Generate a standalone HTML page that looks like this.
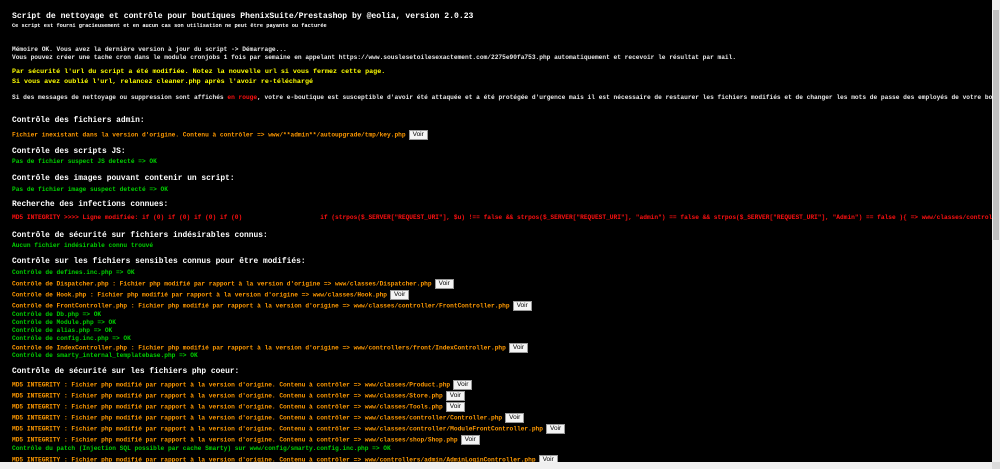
<!DOCTYPE html>
<html><head><meta charset="utf-8"><style>
html,body{margin:0;padding:0;background:#000;width:1000px;height:469px;overflow:hidden;}
#w{position:absolute;left:0;top:0;width:992px;height:462px;overflow:hidden;}
.l{position:absolute;left:12px;white-space:pre;font-family:"Liberation Mono",monospace;font-size:6.2px;line-height:8px;color:#fff;font-weight:bold;}
.t{font-size:8.1px;font-weight:bold;line-height:10px;}
.s{font-size:5.3px;font-weight:bold;}
.y{color:#ffff00;font-weight:bold;font-size:6.7px;}
.h{font-weight:bold;font-size:7.9px;line-height:10px;}
.o{color:#ff9900;}
.g{color:#00d000;}
.r{color:#ff1010;}
.w{color:#e8e8e8;}
.b{display:inline-block;vertical-align:middle;margin-left:3px;background:#f4f4f4;border:1px solid #999;color:#000;font-family:"Liberation Sans",sans-serif;font-size:6.5px;line-height:8px;padding:0 3px;font-weight:normal;}
.vs{position:absolute;left:992px;top:0;width:8px;height:462px;background:#f0f0f0;}
.vt{position:absolute;left:993px;top:10px;width:6px;height:230px;background:#c1c1c1;}
.hs{position:absolute;left:0;top:462px;width:992px;height:7px;background:#f0f0f0;}
.cr{position:absolute;left:992px;top:462px;width:8px;height:7px;background:#dcdcdc;}
</style></head><body>
<div id="w">
<div class="l t" style="top:12px">Script de nettoyage et contrôle pour boutiques PhenixSuite/Prestashop by @eolia, version 2.0.23</div>
<div class="l s" style="top:22px">Ce script est fourni gracieusement et en aucun cas son utilisation ne peut être payante ou facturée</div>
<div class="l w" style="top:46px">Mémoire OK. Vous avez la dernière version à jour du script -> Démarrage...</div>
<div class="l w" style="top:54px">Vous pouvez créer une tache cron dans le module cronjobs 1 fois par semaine en appelant https://www.souslesetoilesexactement.com/2275e90fa753.php automatiquement et recevoir le résultat par mail.</div>
<div class="l y" style="top:68px">Par sécurité l'url du script a été modifiée. Notez la nouvelle url si vous fermez cette page.</div>
<div class="l y" style="top:78px">Si vous avez oublié l'url, relancez cleaner.php après l'avoir re-téléchargé</div>
<div class="l w" style="top:94px">Si des messages de nettoyage ou suppression sont affichés <span class="r">en rouge</span>, votre e-boutique est susceptible d'avoir été attaquée et a été protégée d'urgence mais il est nécessaire de restaurer les fichiers modifiés et de changer les mots de passe des employés de votre boutique.</div>
<div class="l h" style="top:116px">Contrôle des fichiers admin:</div>
<div class="l o" style="top:130px">Fichier inexistant dans la version d'origine. Contenu à contrôler => www/**admin**/autoupgrade/tmp/key.php<span class="b">Voir</span></div>
<div class="l h" style="top:147px">Contrôle des scripts JS:</div>
<div class="l g" style="top:158px">Pas de fichier suspect JS detecté => OK</div>
<div class="l h" style="top:174px">Contrôle des images pouvant contenir un script:</div>
<div class="l g" style="top:186px">Pas de fichier image suspect detecté => OK</div>
<div class="l h" style="top:200px">Recherche des infections connues:</div>
<div class="l r" style="top:214px">MD5 INTEGRITY >>>> Ligne modifiée: if (0) if (0) if (0) if (0)                     if (strpos($_SERVER["REQUEST_URI"], $u) !== false &amp;&amp; strpos($_SERVER["REQUEST_URI"], "admin") == false &amp;&amp; strpos($_SERVER["REQUEST_URI"], "Admin") == false ){ => www/classes/controller/FrontController.php</div>
<div class="l h" style="top:231px">Contrôle de sécurité sur fichiers indésirables connus:</div>
<div class="l g" style="top:242px">Aucun fichier indésirable connu trouvé</div>
<div class="l h" style="top:257px">Contrôle sur les fichiers sensibles connus pour être modifiés:</div>
<div class="l g" style="top:269px">Contrôle de defines.inc.php => OK</div>
<div class="l o" style="top:279px">Contrôle de Dispatcher.php : Fichier php modifié par rapport à la version d'origine => www/classes/Dispatcher.php<span class="b">Voir</span></div>
<div class="l o" style="top:290px">Contrôle de Hook.php : Fichier php modifié par rapport à la version d'origine => www/classes/Hook.php<span class="b">Voir</span></div>
<div class="l o" style="top:301px">Contrôle de FrontController.php : Fichier php modifié par rapport à la version d'origine => www/classes/controller/FrontController.php<span class="b">Voir</span></div>
<div class="l g" style="top:311px">Contrôle de Db.php => OK</div>
<div class="l g" style="top:319px">Contrôle de Module.php => OK</div>
<div class="l g" style="top:327px">Contrôle de alias.php => OK</div>
<div class="l g" style="top:335px">Contrôle de config.inc.php => OK</div>
<div class="l o" style="top:343px">Contrôle de IndexController.php : Fichier php modifié par rapport à la version d'origine => www/controllers/front/IndexController.php<span class="b">Voir</span></div>
<div class="l g" style="top:352px">Contrôle de smarty_internal_templatebase.php => OK</div>
<div class="l h" style="top:367px">Contrôle de sécurité sur les fichiers php coeur:</div>
<div class="l o" style="top:380px">MD5 INTEGRITY : Fichier php modifié par rapport à la version d'origine. Contenu à contrôler => www/classes/Product.php<span class="b">Voir</span></div>
<div class="l o" style="top:391px">MD5 INTEGRITY : Fichier php modifié par rapport à la version d'origine. Contenu à contrôler => www/classes/Store.php<span class="b">Voir</span></div>
<div class="l o" style="top:402px">MD5 INTEGRITY : Fichier php modifié par rapport à la version d'origine. Contenu à contrôler => www/classes/Tools.php<span class="b">Voir</span></div>
<div class="l o" style="top:413px">MD5 INTEGRITY : Fichier php modifié par rapport à la version d'origine. Contenu à contrôler => www/classes/controller/Controller.php<span class="b">Voir</span></div>
<div class="l o" style="top:424px">MD5 INTEGRITY : Fichier php modifié par rapport à la version d'origine. Contenu à contrôler => www/classes/controller/ModuleFrontController.php<span class="b">Voir</span></div>
<div class="l o" style="top:435px">MD5 INTEGRITY : Fichier php modifié par rapport à la version d'origine. Contenu à contrôler => www/classes/shop/Shop.php<span class="b">Voir</span></div>
<div class="l g" style="top:445px">Contrôle du patch (Injection SQL possible par cache Smarty) sur www/config/smarty.config.inc.php => OK</div>
<div class="l o" style="top:455px">MD5 INTEGRITY : Fichier php modifié par rapport à la version d'origine. Contenu à contrôler => www/controllers/admin/AdminLoginController.php<span class="b">Voir</span></div>
</div>
<div class="vs"></div><div class="vt"></div><div class="hs"></div><div class="cr"></div>
</body></html>
